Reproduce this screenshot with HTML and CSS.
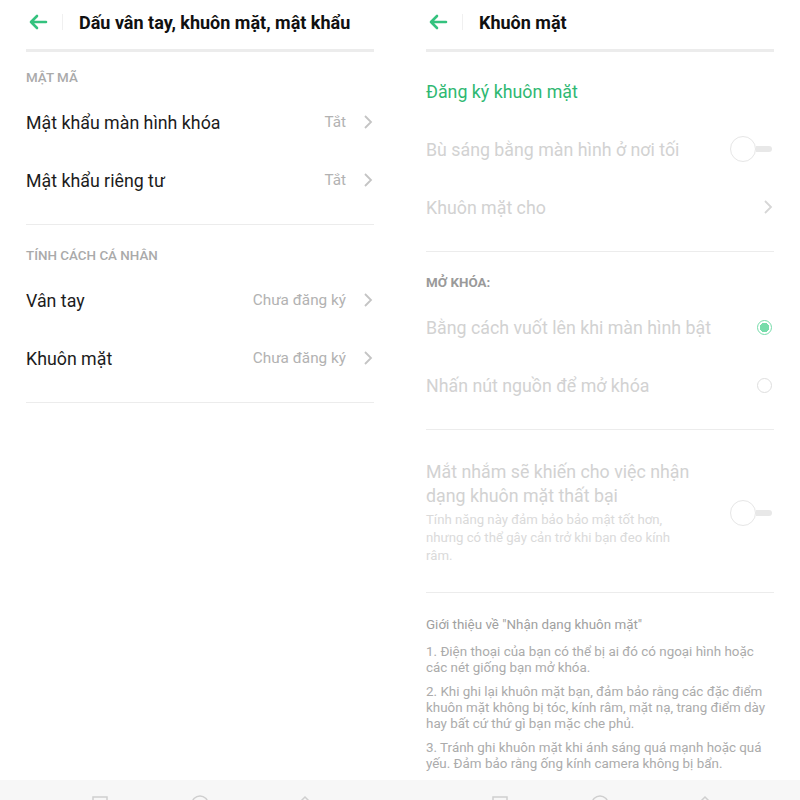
FILE: index.html
```html
<!DOCTYPE html>
<html lang="vi">
<head>
    <meta charset="UTF-8">
    <meta name="viewport" content="width=device-width, initial-scale=1.0">
    <title>Dấu vân tay, khuôn mặt, mật khẩu</title>
    <link rel="stylesheet" href="styles.css">
</head>
<body>
<div class="screens">

    <!-- left screen -->
    <div class="screen">
        <div class="topbar">
            <svg class="back" width="20" height="16" viewBox="0 0 20 16"><path d="M18 8H3M9 2L3 8l6 6" fill="none" stroke="#34c27e" stroke-width="2.6" stroke-linecap="round" stroke-linejoin="round"/></svg>
            <span class="bar-sep"></span>
            <h1>Dấu vân tay, khuôn mặt, mật khẩu</h1>
        </div>
        <div class="thick-line"></div>

        <div class="group-label first">MẬT MÃ</div>
        <div class="row">
            <span class="row-text">Mật khẩu màn hình khóa</span>
            <span class="row-value">Tắt</span>
            <svg class="chev" width="10" height="16" viewBox="0 0 10 16"><path d="M2 2l6 6-6 6" fill="none" stroke="#c4c4c4" stroke-width="1.8"/></svg>
        </div>
        <div class="row">
            <span class="row-text">Mật khẩu riêng tư</span>
            <span class="row-value">Tắt</span>
            <svg class="chev" width="10" height="16" viewBox="0 0 10 16"><path d="M2 2l6 6-6 6" fill="none" stroke="#c4c4c4" stroke-width="1.8"/></svg>
        </div>
        <div class="line"></div>

        <div class="group-label">TÍNH CÁCH CÁ NHÂN</div>
        <div class="row">
            <span class="row-text">Vân tay</span>
            <span class="row-value">Chưa đăng ký</span>
            <svg class="chev" width="10" height="16" viewBox="0 0 10 16"><path d="M2 2l6 6-6 6" fill="none" stroke="#c4c4c4" stroke-width="1.8"/></svg>
        </div>
        <div class="row">
            <span class="row-text">Khuôn mặt</span>
            <span class="row-value">Chưa đăng ký</span>
            <svg class="chev" width="10" height="16" viewBox="0 0 10 16"><path d="M2 2l6 6-6 6" fill="none" stroke="#c4c4c4" stroke-width="1.8"/></svg>
        </div>
        <div class="line"></div>

        <div class="spacer"></div>
        <div class="navbar">
            <svg width="400" height="20" viewBox="0 0 400 20"><rect x="93" y="17" width="14" height="12" fill="none" stroke="#cfcfcf" stroke-width="1.5"/><circle cx="200" cy="24" r="8" fill="none" stroke="#cfcfcf" stroke-width="1.5"/><path d="M296 26l9-9 9 9" fill="none" stroke="#cfcfcf" stroke-width="1.5"/></svg>
        </div>
    </div>

    <!-- right screen -->
    <div class="screen">
        <div class="topbar">
            <svg class="back" width="20" height="16" viewBox="0 0 20 16"><path d="M18 8H3M9 2L3 8l6 6" fill="none" stroke="#34c27e" stroke-width="2.6" stroke-linecap="round" stroke-linejoin="round"/></svg>
            <span class="bar-sep"></span>
            <h1>Khuôn mặt</h1>
        </div>
        <div class="thick-line"></div>

        <div class="rows-top">
            <div class="row">
                <span class="row-text green">Đăng ký khuôn mặt</span>
            </div>
            <div class="row">
                <span class="row-text off">Bù sáng bằng màn hình ở nơi tối</span>
                <span class="switch"><span class="knob"></span><span class="track"></span></span>
            </div>
            <div class="row">
                <span class="row-text off">Khuôn mặt cho</span>
                <svg class="chev" width="10" height="16" viewBox="0 0 10 16"><path d="M2 2l6 6-6 6" fill="none" stroke="#d6d6d6" stroke-width="1.8"/></svg>
            </div>
        </div>
        <div class="line"></div>

        <div class="group-label dark">MỞ KHÓA:</div>
        <div class="row">
            <span class="row-text off">Bằng cách vuốt lên khi màn hình bật</span>
            <span class="radio checked"></span>
        </div>
        <div class="row">
            <span class="row-text off">Nhấn nút nguồn để mở khóa</span>
            <span class="radio"></span>
        </div>
        <div class="line"></div>

        <div class="big-item">
            <div class="big-text">
                <div class="big-title">Mắt nhắm sẽ khiến cho việc nhận dạng khuôn mặt thất bại</div>
                <div class="big-sub">Tính năng này đảm bảo bảo mật tốt hơn, nhưng có thể gây cản trở khi bạn đeo kính râm.</div>
            </div>
            <span class="switch"><span class="knob"></span><span class="track"></span></span>
        </div>
        <div class="line"></div>

        <div class="notes">
            <p class="notes-head">Giới thiệu về "Nhận dạng khuôn mặt"</p>
            <p>1. Điện thoại của bạn có thể bị ai đó có ngoại hình hoặc các nét giống bạn mở khóa.</p>
            <p>2. Khi ghi lại khuôn mặt bạn, đảm bảo rằng các đặc điểm khuôn mặt không bị tóc, kính râm, mặt nạ, trang điểm dày hay bất cứ thứ gì bạn mặc che phủ.</p>
            <p>3. Tránh ghi khuôn mặt khi ánh sáng quá mạnh hoặc quá yếu. Đảm bảo rằng ống kính camera không bị bẩn.</p>
        </div>

        <div class="spacer"></div>
        <div class="navbar">
            <svg width="400" height="20" viewBox="0 0 400 20"><rect x="93" y="17" width="14" height="12" fill="none" stroke="#cfcfcf" stroke-width="1.5"/><circle cx="200" cy="24" r="8" fill="none" stroke="#cfcfcf" stroke-width="1.5"/><path d="M296 26l9-9 9 9" fill="none" stroke="#cfcfcf" stroke-width="1.5"/></svg>
        </div>
    </div>

</div>
</body>
</html>
```

FILE: styles.css
```css
body {
    margin: 0;
    background: #ffffff;
    font-family: Roboto, "Noto Sans", sans-serif;
    color: #1c1c1c;
}
.screens {
    display: flex;
    width: 800px;
    height: 800px;
    overflow: hidden;
}
.screen {
    width: 400px;
    height: 800px;
    display: flex;
    flex-direction: column;
}
.topbar {
    height: 49px;
    display: flex;
    align-items: center;
    padding-left: 28px;
    box-sizing: border-box;
    padding-bottom: 5px;
}
.back {
    display: block;
}
.bar-sep {
    width: 1px;
    height: 16px;
    background: #f0f0f0;
    margin: 0 16px 0 14px;
}
h1 {
    margin: 0;
    font-size: 18px;
    font-weight: bold;
    color: #111;
}
.thick-line {
    height: 3px;
    background: #ececec;
    margin: 0 26px;
}
.line {
    height: 1px;
    background: #ececec;
    margin: 15px 26px 0;
}
.group-label {
    font-size: 13.4px;
    line-height: 20px;
    font-weight: 500;
    color: #aaaaaa;
    padding: 21px 26px 5px;
}
.group-label.first {
    padding-top: 16px;
}
.group-label.dark {
    color: #9a9a9a;
    font-weight: bold;
}
.rows-top {
    padding-top: 10px;
}
.row {
    height: 58px;
    display: flex;
    align-items: center;
    padding: 0 26px;
}
.row-text {
    flex: 1;
    font-size: 17.8px;
}
.row-text.green {
    color: #2fb872;
}
.row-text.off {
    color: #d2d2d2;
}
.row-value {
    font-size: 15.3px;
    color: #b2b2b2;
    margin-right: 17px;
}
.chev {
    display: block;
    margin-right: 1px;
}
.switch {
    display: flex;
    align-items: center;
    margin-right: 2px;
}
.knob {
    width: 24px;
    height: 24px;
    border: 1px solid #e6e6e6;
    border-radius: 50%;
    background: #fff;
}
.track {
    width: 16px;
    height: 6px;
    background: #e8e8e8;
    border-radius: 0 3px 3px 0;
}
.radio {
    width: 15px;
    height: 15px;
    border: 1px solid #dedede;
    border-radius: 50%;
    box-sizing: border-box;
    margin-right: 2px;
}
.radio.checked {
    border: 1.5px solid #76dcaa;
    background: radial-gradient(circle, #76dcaa 0 4.5px, #fff 5px);
}
.big-item {
    display: flex;
    align-items: center;
    padding: 30px 26px 12px;
}
.big-text {
    flex: 1;
}
.big-title {
    font-size: 17.8px;
    line-height: 24px;
    color: #d2d2d2;
    width: 280px;
}
.big-sub {
    font-size: 13.2px;
    line-height: 18px;
    color: #dadada;
    margin-top: 3px;
    width: 256px;
}
.notes {
    padding: 24px 26px 0;
    font-size: 13.4px;
    line-height: 16px;
    color: #ababab;
}
.notes p {
    margin: 8px 0 0;
}
.notes .notes-head {
    margin: 0 0 11px;
    color: #a0a0a0;
}
.spacer {
    flex: 1;
}
.navbar {
    height: 20px;
    background: #f7f7f7;
    overflow: hidden;
}
.navbar svg {
    display: block;
}
```
